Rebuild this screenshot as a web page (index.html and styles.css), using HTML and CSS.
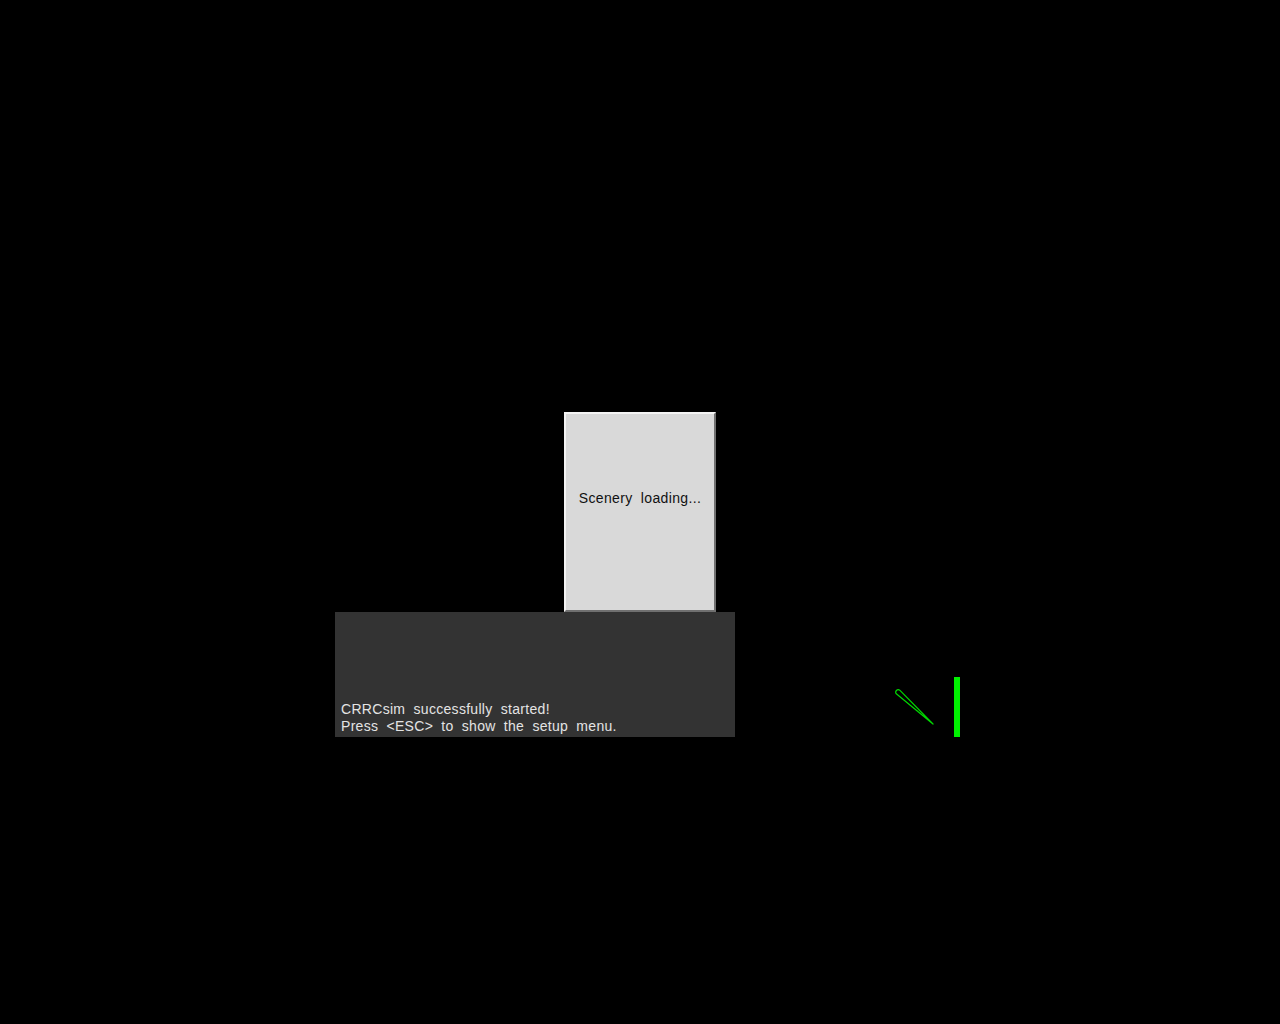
FILE: index.html
```html
<!DOCTYPE html>
<html>
<head>
<meta charset="utf-8">
<link rel="stylesheet" href="styles.css">
</head>
<body>
<div class="scene">
  <div class="dialog"><span class="dialog-text">Scenery loading...</span></div>
  <div class="console">
    <div class="line">CRRCsim successfully started!</div>
    <div class="line">Press &lt;ESC&gt; to show the setup menu.</div>
  </div>
  <svg class="hud" width="80" height="70" viewBox="0 0 80 70">
    <path d="M 4.7 13.2 L 38 47 L 1.3 16.8 A 2.5 2.5 0 0 1 4.7 13.2 Z" fill="none" stroke="#00d800" stroke-width="1.2" stroke-linejoin="round"/>
    <rect x="59" y="0" width="6" height="60" fill="#00f000"/>
  </svg>
</div>
</body>
</html>
```
FILE: styles.css
```css
html, body {
  margin: 0;
  padding: 0;
  background: #000;
}
.scene {
  position: relative;
  width: 1280px;
  height: 1024px;
  background: #000;
  overflow: hidden;
  font-family: "Liberation Sans", Arial, sans-serif;
}
.dialog {
  position: absolute;
  left: 564px;
  top: 412px;
  width: 148px;
  height: 196px;
  background: #d9d9d9;
  border-top: 2px solid #f4f4f4;
  border-left: 2px solid #f4f4f4;
  border-right: 2px solid #707070;
  border-bottom: 2px solid #707070;
  display: flex;
  align-items: center;
  justify-content: center;
}
.dialog-text {
  font-size: 14px;
  color: #111;
  letter-spacing: 0.35px;
  word-spacing: 4px;
  white-space: nowrap;
  margin-top: -28px;
}
.console {
  position: absolute;
  left: 335px;
  top: 612px;
  width: 394px;
  height: 123px;
  padding: 0 0 2px 6px;
  background: #333333;
  display: flex;
  flex-direction: column;
  justify-content: flex-end;
  color: #e4e4e4;
  font-size: 14px;
  line-height: 17px;
  letter-spacing: 0.3px;
  word-spacing: 4px;
}
.line {
  white-space: nowrap;
}
.hud {
  position: absolute;
  left: 895px;
  top: 677px;
}
```
